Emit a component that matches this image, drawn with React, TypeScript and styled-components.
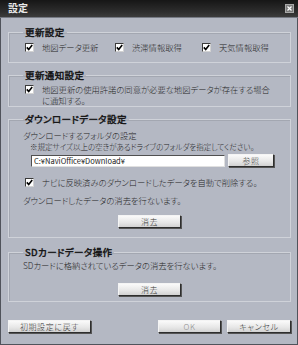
import styled, { createGlobalStyle, css } from 'styled-components';
import { FC, ReactNode } from 'react';

const GlobalStyle = createGlobalStyle`
  html, body {
    margin: 0;
    padding: 0;
    background: #b4b8c3;
  }
  body {
    font-family: "Noto Sans CJK JP", "Noto Sans", sans-serif;
    font-feature-settings: "palt";
    color: #262626;
  }
`;

const Window = styled.div`
  width: 298px;
  height: 345px;
  box-sizing: border-box;
  background: #b4b8c3;
  border: 1px solid #50535b;
  border-top: none;
  display: flex;
  flex-direction: column;
`;

const TitleBar = styled.div`
  height: 18px;
  box-sizing: border-box;
  display: flex;
  align-items: center;
  justify-content: space-between;
  padding: 0 4px 1px 8px;
  margin: 0 -1px;
  background: linear-gradient(#161616, #2e2e2e 70%, #3c3c3c);
  border-bottom: 1px solid #767a84;
`;

const Title = styled.span`
  color: #e8e8e8;
  font-size: 10px;
  font-weight: 700;
  line-height: 12px;
`;

const CloseButton = styled.span`
  width: 9px;
  height: 9px;
  box-sizing: border-box;
  background: #7a7a7a;
  border: 1px solid #a8a8a8;
  display: flex;
  align-items: center;
  justify-content: center;
`;

const Body = styled.div`
  flex: 1;
  display: flex;
  flex-direction: column;
  padding: 8px 6px 0 7px;
`;

const Group = styled.fieldset<{ $gap?: number }>`
  margin: ${({ $gap }) => $gap ?? 0}px 0 0;
  padding: 0 6px 0 14px;
  min-inline-size: 0;
  border: 1px solid #cfd2d9;
  box-shadow: inset 1px 1px 0 #a3a7b1;
`;

const Legend = styled.legend`
  padding: 0 2px;
  font-size: 9.5px;
  font-weight: 400;
  line-height: 12px;
  color: #111;
  -webkit-text-stroke: 0.4px #111;
  letter-spacing: 0.4px;
`;

const GroupContent = styled.div<{ $top: number; $bottom: number }>`
  display: flex;
  flex-direction: column;
  padding: ${({ $top, $bottom }) => `${$top}px 0 ${$bottom}px`};
`;

const CheckRow = styled.div<{ $top?: number }>`
  display: grid;
  grid-template-columns: 90px 87px auto;
  margin: ${({ $top }) => $top ?? 0}px 0 0 2px;
`;

const CheckItem = styled.label<{ $multi?: boolean; $span?: boolean }>`
  display: flex;
  gap: 8px;
  font-size: 8.3px;
  font-weight: 300;
  line-height: 12px;
  align-items: center;
  white-space: nowrap;
  ${({ $span }) =>
    $span &&
    css`
      grid-column: 1 / -1;
    `};
  ${({ $multi }) =>
    $multi &&
    css`
      align-items: flex-start;
      line-height: 11px;
    `};
`;

const Box = styled.span<{ $multi?: boolean }>`
  width: 9px;
  height: 9px;
  box-sizing: border-box;
  flex-shrink: 0;
  background: #fff;
  border: 1px solid;
  border-color: #3a3a3a #d2d2d2 #d2d2d2 #3a3a3a;
  display: flex;
  align-items: center;
  justify-content: center;
  margin-top: ${({ $multi }) => ($multi ? '1px' : '0')};
`;

const Text = styled.div<{ $small?: boolean; $indent?: number; $top?: number }>`
  font-size: ${({ $small }) => ($small ? '7.5px' : '8.3px')};
  font-weight: 300;
  line-height: 12px;
  margin-left: ${({ $indent }) => $indent ?? 0}px;
  margin-top: ${({ $top }) => $top ?? 0}px;
  white-space: nowrap;
`;

const FolderRow = styled.div`
  display: flex;
  align-items: center;
  gap: 3px;
  margin: 1px 0 0 8px;
`;

const PathInput = styled.input`
  width: 194px;
  height: 12px;
  box-sizing: border-box;
  padding: 0 2px;
  margin: 0;
  background: #fff;
  border: 1px solid;
  border-color: #505050 #e0e0e0 #e0e0e0 #505050;
  font-family: inherit;
  font-size: 7.5px;
  color: #222;
  outline: none;
`;

const Button = styled.button<{ $w: number; $disabled?: boolean }>`
  width: ${({ $w }) => $w}px;
  height: 13px;
  box-sizing: border-box;
  padding: 0;
  margin: 0;
  background: linear-gradient(#fafafa, #e6e6e6 60%, #d2d2d2);
  border: 1px solid;
  border-color: #f4f4f4 #2e2e2e #2e2e2e #f4f4f4;
  box-shadow: 1px 1px 0 #555;
  font-family: inherit;
  font-feature-settings: "palt";
  font-size: 8px;
  font-weight: 300;
  line-height: 11px;
  letter-spacing: 0.6px;
  color: ${({ $disabled }) => ($disabled ? '#8d8d8d' : '#333')};
`;

const Center = styled.div<{ $top: number }>`
  display: flex;
  justify-content: center;
  margin-top: ${({ $top }) => $top}px;
  padding-right: 8px;
`;

const Footer = styled.div`
  display: flex;
  justify-content: space-between;
  margin-top: 18px;
`;

const FooterRight = styled.div`
  display: flex;
  gap: 6px;
`;

const CheckMark = () => (
  <svg width='7' height='7' viewBox='0 0 7 7'>
    <path d='M0.8 3.4 L2.7 5.4 L6.2 0.9' fill='none' stroke='#000' strokeWidth='1.6' />
  </svg>
);

const Checkbox: FC<{ children: ReactNode; multi?: boolean; span?: boolean }> = ({
  children,
  multi,
  span
}) => (
  <CheckItem $multi={multi} $span={span}>
    <Box $multi={multi}>
      <CheckMark />
    </Box>
    <span>{children}</span>
  </CheckItem>
);

const App = () => {
  return (
    <>
      <GlobalStyle />
      <Window>
        <TitleBar>
          <Title>設定</Title>
          <CloseButton>
            <svg width='5' height='5' viewBox='0 0 5 5'>
              <path d='M0.5 0.5 L4.5 4.5 M4.5 0.5 L0.5 4.5' stroke='#fff' strokeWidth='1.2' />
            </svg>
          </CloseButton>
        </TitleBar>
        <Body>
          <Group>
            <Legend>更新設定</Legend>
            <GroupContent $top={3} $bottom={9}>
              <CheckRow>
                <Checkbox>地図データ更新</Checkbox>
                <Checkbox>渋滞情報取得</Checkbox>
                <Checkbox>天気情報取得</Checkbox>
              </CheckRow>
            </GroupContent>
          </Group>

          <Group $gap={6}>
            <Legend>更新通知設定</Legend>
            <GroupContent $top={3} $bottom={0}>
              <CheckRow>
                <Checkbox multi span>
                  地図更新の使用許諾の同意が必要な地図データが存在する場合
                  <br />
                  に通知する。
                </Checkbox>
              </CheckRow>
            </GroupContent>
          </Group>

          <Group $gap={6}>
            <Legend>ダウンロードデータ設定</Legend>
            <GroupContent $top={4} $bottom={9}>
              <Text>ダウンロードするフォルダの設定</Text>
              <Text $small $indent={7}>
                ※規定サイズ以上の空きがあるドライブのフォルダを指定してください。
              </Text>
              <FolderRow>
                <PathInput readOnly value='C:¥NaviOffice¥Download¥' />
                <Button $w={46}>参照</Button>
              </FolderRow>
              <CheckRow $top={9}>
                <Checkbox span>ナビに反映済みのダウンロードしたデータを自動で削除する。</Checkbox>
              </CheckRow>
              <Text $top={6}>ダウンロードしたデータの消去を行ないます。</Text>
              <Center $top={9}>
                <Button $w={63}>消去</Button>
              </Center>
            </GroupContent>
          </Group>

          <Group $gap={8}>
            <Legend>SDカードデータ操作</Legend>
            <GroupContent $top={1} $bottom={5}>
              <Text>SDカードに格納されているデータの消去を行ないます。</Text>
              <Center $top={12}>
                <Button $w={63}>消去</Button>
              </Center>
            </GroupContent>
          </Group>

          <Footer>
            <Button $w={83}>初期設定に戻す</Button>
            <FooterRight>
              <Button $w={63} $disabled>
                OK
              </Button>
              <Button $w={64}>キャンセル</Button>
            </FooterRight>
          </Footer>
        </Body>
      </Window>
    </>
  );
};

export default App;
